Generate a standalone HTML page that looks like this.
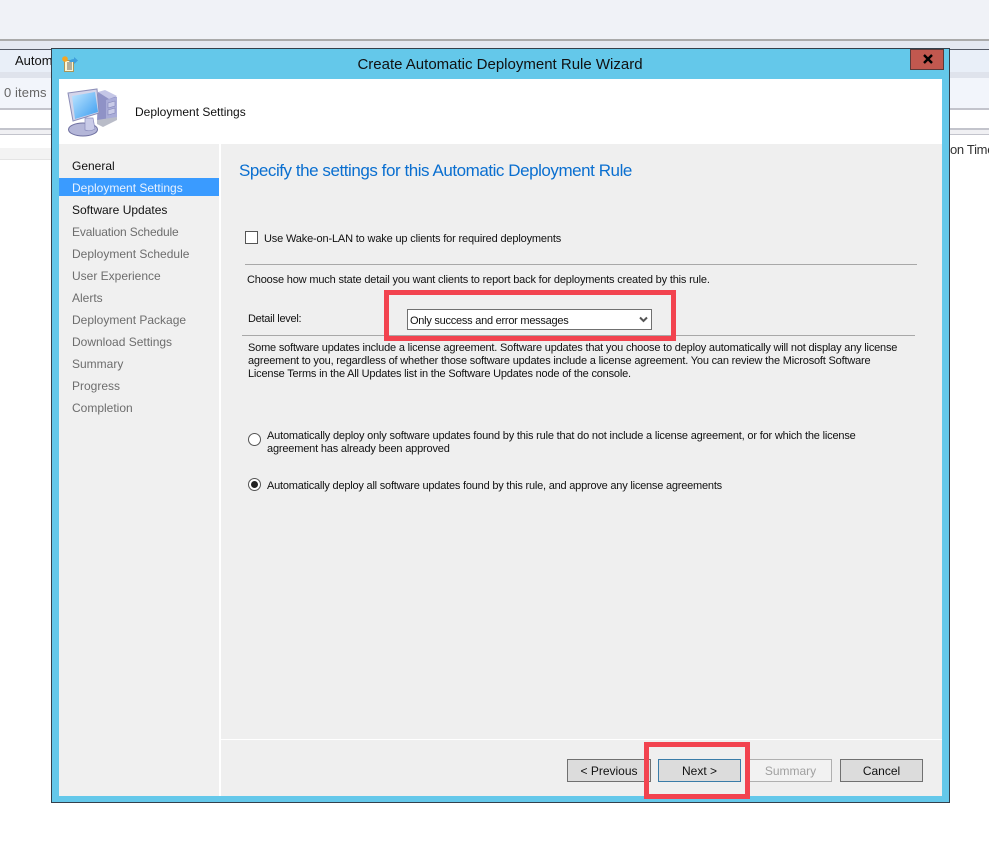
<!DOCTYPE html>
<html><head><meta charset="utf-8"><style>
html,body{margin:0;padding:0;width:989px;height:841px;overflow:hidden;background:#fff}
body{position:relative;font-family:"Liberation Sans",sans-serif;font-size:12px;color:#111}
.b{position:absolute}
.t{position:absolute;white-space:nowrap;line-height:14px}
.n{left:72px;letter-spacing:0}
.g{color:#6d6d6d}
.btn{position:absolute;top:759px;height:23px;box-sizing:border-box;border:1px solid #707070;background:#dcdcdc;text-align:center;line-height:22px}
</style></head><body>
<div class="b" style="left:0;top:0;width:989px;height:39px;background:#f0f2f7"></div>
<div class="b" style="left:0;top:39px;width:989px;height:2px;background:#aaa"></div>
<div class="b" style="left:0;top:41px;width:989px;height:8px;background:#e4e8f1"></div>
<div class="b" style="left:0;top:49px;width:989px;height:1px;background:#555a66"></div>
<div class="b" style="left:0;top:50px;width:989px;height:22px;background:#e9eff8"></div>
<div class="b" style="left:0;top:72px;width:989px;height:6px;background:#dfe3ec"></div>
<div class="b" style="left:0;top:78px;width:989px;height:30px;background:#f2f5fb"></div>
<div class="b" style="left:0;top:108px;width:989px;height:2px;background:#c3c4cc"></div>
<div class="b" style="left:0;top:128px;width:989px;height:2px;background:#c3c4cc"></div>
<div class="b" style="left:0;top:130px;width:989px;height:4px;background:#f0f0f3"></div>
<div class="b" style="left:0;top:134px;width:989px;height:1px;background:#c3c4cc"></div>
<div class="b" style="left:0;top:148px;width:52px;height:11px;background:#f3f3f3"></div>
<div class="b" style="left:0;top:159px;width:52px;height:1px;background:#e4e4e4"></div>
<div class="t" style="left:15px;top:54px;font-size:13px">Autom</div>
<div class="t" style="left:4px;top:86px;color:#666;font-size:13px;letter-spacing:.1px">0 items</div>
<div class="t" style="left:950px;top:143px;font-size:13px;letter-spacing:-.3px;color:#333">on Time</div>

<div class="b" style="left:51px;top:48px;width:897px;height:753px;border:1px solid #34404c;background:#64c8ea"></div>
<div class="t" style="left:300px;top:57px;width:400px;text-align:center;font-size:15px;line-height:16px;color:#111">Create Automatic Deployment Rule Wizard</div>
<svg class="b" style="left:60px;top:54px" width="20" height="20" viewBox="60 54 20 20">
<rect x="64.5" y="60.5" width="9" height="11" fill="#fff6cf" stroke="#a8955a"/>
<path d="M67 63h5M67 65h5M67 67h5M67 69h5" stroke="#666"/>
<path d="M69 62q1-3 5-3v-2l4 3.500-4 3.500v-2q-3 0-5 0z" fill="#3f9fdc"/>
<circle cx="65" cy="59" r="2.800" fill="#f5a623"/>
</svg>
<div class="b" style="left:910px;top:49px;width:34px;height:21px;box-sizing:border-box;border:1px solid #5a3a3a;background:#c1584f"></div>
<svg class="b" style="left:922px;top:54px" width="12" height="10" viewBox="0 0 12 10"><path d="M2 1l8 8M10 1l-8 8" stroke="#000" stroke-width="2.400"/></svg>

<div class="b" style="left:59px;top:79px;width:883px;height:65px;background:#fff"></div>
<svg class="b" style="left:66px;top:86px" width="54" height="52" viewBox="66 86 54 52">
<defs><linearGradient id="s" x1="0" y1="0" x2="1" y2="1"><stop offset="0" stop-color="#bfe6ff"/><stop offset="1" stop-color="#3a9cf0"/></linearGradient></defs>
<path d="M98 92l19 5v20l-14 8-6-3z" fill="#8f92c6"/>
<path d="M98 92l7-2 12 6-8 3z" fill="#c4c6e6"/>
<path d="M106 100l11-3v20l-11 5z" fill="#a9acd8"/>
<path d="M108 103l7-2v5l-7 2zM108 110l7-2v5l-7 2z" fill="#c9cbe8" stroke="#8184b8" stroke-width=".6"/>
<path d="M97 120l20-3v3l-14 7-6-3z" fill="#b9bcc8"/>
<ellipse cx="83" cy="129.500" rx="14.500" ry="6.500" fill="#b4b6d8" stroke="#6f70a0"/>
<path d="M85 118h8l2 11q-5 3-10 1z" fill="#c9cbe8" stroke="#8a8cbc" stroke-width=".7"/>
<path d="M68 93l29-4 2 24-26 8z" fill="#d4d5ea" stroke="#8c8eb8"/>
<path d="M72 96l23-4 3 20-23 7z" fill="url(#s)"/>
</svg>
<div class="t" style="left:135px;top:105px">Deployment Settings</div>

<div class="b" style="left:59px;top:144px;width:160px;height:652px;background:#f0f0f0"></div>
<div class="b" style="left:219px;top:144px;width:2px;height:652px;background:#fff"></div>
<div class="b" style="left:221px;top:144px;width:721px;height:652px;background:#efefef"></div>
<div class="b" style="left:59px;top:178px;width:160px;height:18px;background:#3a9bff"></div>
<div class="t n" style="top:159px">General</div>
<div class="t n" style="top:181px;color:#e8f2ff">Deployment Settings</div>
<div class="t n" style="top:203px">Software Updates</div>
<div class="t n g" style="top:225px;letter-spacing:-.15px">Evaluation Schedule</div>
<div class="t n g" style="top:247px">Deployment Schedule</div>
<div class="t n g" style="top:269px">User Experience</div>
<div class="t n g" style="top:291px">Alerts</div>
<div class="t n g" style="top:313px">Deployment Package</div>
<div class="t n g" style="top:335px">Download Settings</div>
<div class="t n g" style="top:357px">Summary</div>
<div class="t n g" style="top:379px">Progress</div>
<div class="t n g" style="top:401px">Completion</div>

<div class="t" style="left:239px;top:162px;font-size:17px;line-height:18px;color:#0a6fd0;letter-spacing:-.45px">Specify the settings for this Automatic Deployment Rule</div>

<div class="b" style="left:245px;top:231px;width:13px;height:13px;box-sizing:border-box;border:1px solid #555;background:#fff"></div>
<div class="t" style="left:264px;top:232px;font-size:11px;letter-spacing:-.16px">Use Wake-on-LAN to wake up clients for required deployments</div>
<div class="b" style="left:245px;top:264px;width:672px;height:1px;background:#a8a8a8"></div>
<div class="t" style="left:247px;top:273px;font-size:11px;letter-spacing:-.17px">Choose how much state detail you want clients to report back for deployments created by this rule.</div>
<div class="t" style="left:248px;top:312px;font-size:11px;letter-spacing:-.27px">Detail level:</div>
<div class="b" style="left:407px;top:309px;width:245px;height:21px;box-sizing:border-box;border:1px solid #707070;background:#fff"></div>
<div class="t" style="left:410px;top:314px;font-size:11px;letter-spacing:-.25px">Only success and error messages</div>
<svg class="b" style="left:639px;top:316px" width="9" height="8" viewBox="0 0 9 8"><path d="M1 1.500l3.500 3.500 3.500-3.500" fill="none" stroke="#555" stroke-width="2"/></svg>
<div class="b" style="left:242px;top:335px;width:673px;height:1px;background:#a8a8a8"></div>
<div class="t" style="left:248px;top:342px;font-size:11px;line-height:13px;letter-spacing:-.19px">Some software updates include a license agreement. Software updates that you choose to deploy automatically will not display any license<br>agreement to you, regardless of whether those software updates include a license agreement. You can review the Microsoft Software<br>License Terms in the All Updates list in the Software Updates node of the console.</div>

<div class="b" style="left:248px;top:433px;width:13px;height:13px;box-sizing:border-box;border:1px solid #555;border-radius:50%;background:#fff"></div>
<div class="t" style="left:267px;top:430px;font-size:11px;line-height:13px;letter-spacing:-.18px">Automatically deploy only software updates found by this rule that do not include a license agreement, or for which the license<br>agreement has already been approved</div>
<div class="b" style="left:248px;top:478px;width:13px;height:13px;box-sizing:border-box;border:1px solid #555;border-radius:50%;background:#fff"></div>
<div class="b" style="left:251px;top:481px;width:7px;height:7px;border-radius:50%;background:#222"></div>
<div class="t" style="left:267px;top:479px;font-size:11px;letter-spacing:-.21px">Automatically deploy all software updates found by this rule, and approve any license agreements</div>

<div class="b" style="left:221px;top:739px;width:721px;height:1px;background:#fff"></div>
<div class="btn" style="left:567px;width:84px">&lt; Previous</div>
<div class="btn" style="left:658px;width:83px;border-color:#3a7ca8">Next &gt;</div>
<div class="btn" style="left:749px;width:83px;background:#f2f2f2;border-color:#b0b0b0;color:#a0a0a0">Summary</div>
<div class="btn" style="left:840px;width:83px">Cancel</div>

<div class="b" style="left:384px;top:290px;width:292px;height:51px;box-sizing:border-box;border:5px solid #f2434f"></div>
<div class="b" style="left:644px;top:742px;width:106px;height:57px;box-sizing:border-box;border:5px solid #f2434f"></div>
</body></html>
